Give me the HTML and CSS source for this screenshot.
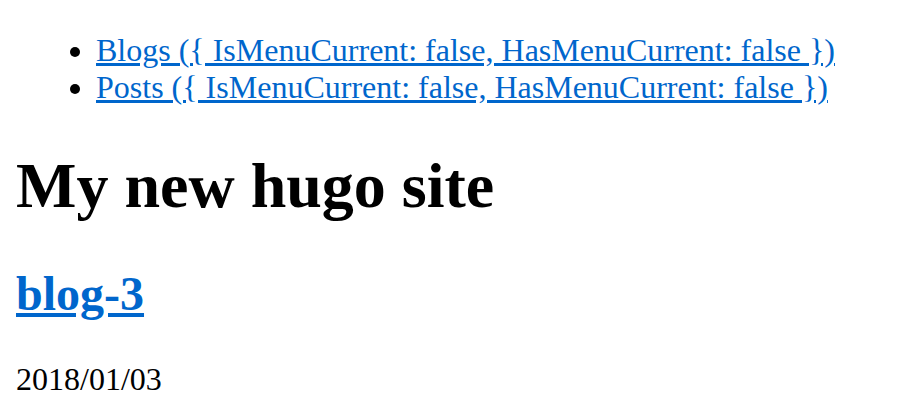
FILE: index.html
```html
<!DOCTYPE html>
<html>
<head>
<meta charset="utf-8">
<link rel="stylesheet" href="styles.css">
</head>
<body>
<ul class="menu">
  <li><a href="#">Blogs ({ IsMenuCurrent: false, HasMenuCurrent: false })</a></li>
  <li><a href="#">Posts ({ IsMenuCurrent: false, HasMenuCurrent: false })</a></li>
</ul>
<h1 class="site-title">My new hugo site</h1>
<h2 class="post-title"><a href="#">blog-3</a></h2>
<p class="post-date">2018/01/03</p>
</body>
</html>
```
FILE: styles.css
```css
html { background: #fff; }
body {
  margin: 0;
  padding: 32px 16px 16px;
  font-family: "Liberation Serif", "Times New Roman", serif;
  font-size: 32px;
  line-height: 37px;
  color: #000;
}
a { color: #0066cc; text-decoration: underline; }
.menu {
  margin: 0 0 32px;
  padding-left: 80px;
  list-style: disc;
}
.site-title {
  font-size: 64px;
  line-height: 74px;
  font-weight: bold;
  margin: 43px 0;
}
.post-title {
  font-size: 48px;
  line-height: 55px;
  font-weight: bold;
  margin: 40px 0;
}
.post-date {
  margin: 32px 0;
}
```
